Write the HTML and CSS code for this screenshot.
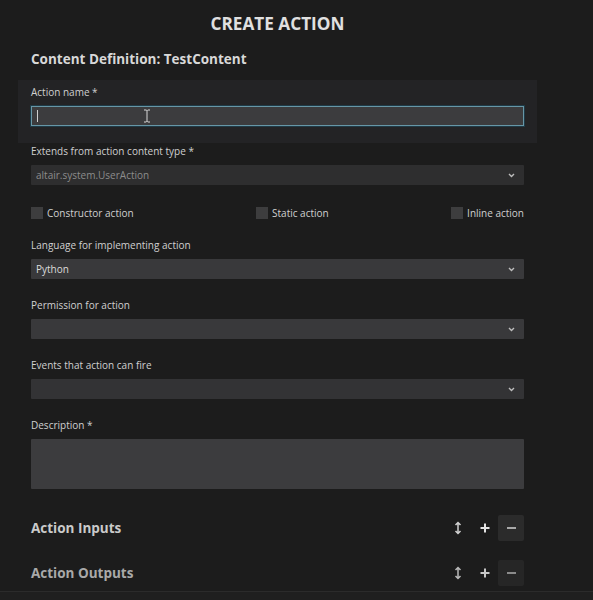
FILE: index.html
```html
<!DOCTYPE html>
<html lang="en">
<head>
<meta charset="utf-8">
<title>Create Action</title>
<link rel="stylesheet" href="styles.css">
</head>
<body>
<div class="page">
  <h1 class="title">CREATE ACTION</h1>
  <h2 class="subtitle">Content Definition: TestContent</h2>

  <div class="panel">
    <div class="label">Action name *</div>
    <div class="input focus"><span class="caret"></span></div>
    <svg class="ibeam" width="8" height="14" viewBox="0 0 8 14"><path d="M1 1h2.2l0.8 0.8 0.8-0.8H7M4 1.8v10.4M1 13h2.2l0.8-0.8 0.8 0.8H7" fill="none" stroke="#d8d8d8" stroke-width="1"/></svg>
  </div>

  <div class="field first">
    <div class="label">Extends from action content type *</div>
    <div class="select disabled"><span>altair.system.UserAction</span><svg class="chev" width="7" height="5" viewBox="0 0 7 5"><path d="M1 1l2.5 2.5L6 1" fill="none" stroke="#bdbdbd" stroke-width="1.4"/></svg></div>
  </div>

  <div class="checks">
    <label class="check"><span class="box"></span>Constructor action</label>
    <label class="check"><span class="box"></span>Static action</label>
    <label class="check"><span class="box"></span>Inline action</label>
  </div>

  <div class="field lang">
    <div class="label">Language for implementing action</div>
    <div class="select"><span>Python</span><svg class="chev" width="7" height="5" viewBox="0 0 7 5"><path d="M1 1l2.5 2.5L6 1" fill="none" stroke="#bdbdbd" stroke-width="1.4"/></svg></div>
  </div>

  <div class="field">
    <div class="label">Permission for action</div>
    <div class="select"><span></span><svg class="chev" width="7" height="5" viewBox="0 0 7 5"><path d="M1 1l2.5 2.5L6 1" fill="none" stroke="#bdbdbd" stroke-width="1.4"/></svg></div>
  </div>

  <div class="field">
    <div class="label">Events that action can fire</div>
    <div class="select dim"><span></span><svg class="chev" width="7" height="5" viewBox="0 0 7 5"><path d="M1 1l2.5 2.5L6 1" fill="none" stroke="#bdbdbd" stroke-width="1.4"/></svg></div>
  </div>

  <div class="field">
    <div class="label">Description *</div>
    <div class="textarea"></div>
  </div>

  <div class="section inputs">
    <div class="section-title">Action Inputs</div>
    <div class="tools">
      <svg class="sort" width="8" height="14" viewBox="0 0 8 14"><path d="M4 1.5v11M1.5 4L4 1.5 6.5 4M1.5 10L4 12.5 6.5 10" fill="none" stroke="#d0d0d0" stroke-width="1.5"/></svg>
      <svg class="plus" width="10" height="10" viewBox="0 0 10 10"><path d="M5 0.5v9M0.5 5h9" stroke="#e4e4e4" stroke-width="2"/></svg>
      <div class="minus"><span></span></div>
    </div>
  </div>

  <div class="section outputs">
    <div class="section-title">Action Outputs</div>
    <div class="tools">
      <svg class="sort" width="8" height="14" viewBox="0 0 8 14"><path d="M4 1.5v11M1.5 4L4 1.5 6.5 4M1.5 10L4 12.5 6.5 10" fill="none" stroke="#b8b8b8" stroke-width="1.5"/></svg>
      <svg class="plus" width="10" height="10" viewBox="0 0 10 10"><path d="M5 0.5v9M0.5 5h9" stroke="#c8c8c8" stroke-width="2"/></svg>
      <div class="minus"><span></span></div>
    </div>
  </div>
</div>
<div class="footer"></div>
</body>
</html>
```

FILE: styles.css
```css
html, body {
  margin: 0;
  padding: 0;
  background: #1c1c1c;
  height: 600px;
  overflow: hidden;
}
body {
  font-family: "Open Sans", "Noto Sans", sans-serif;
  color: #d2d2d2;
}
.page {
  padding: 0 69px 0 31px;
}
.title {
  margin: 0;
  padding-top: 1px;
  height: 45px;
  line-height: 45px;
  text-align: center;
  font-size: 17.2px;
  font-weight: 700;
  color: #e0e0e0;
}
.subtitle {
  margin: 0;
  height: 26px;
  line-height: 26px;
  font-size: 13.5px;
  font-weight: 700;
  color: #d8d8d8;
}
.panel {
  position: relative;
  margin: 8px -13px 0;
  padding: 4px 13px 17px;
  background: #232325;
  height: 42px;
}
.label {
  height: 16px;
  line-height: 16px;
  font-size: 10px;
  color: #d0d0d0;
}
.input {
  margin-top: 6px;
  height: 20px;
  box-sizing: border-box;
  background: #3c3c3e;
  border: 1px solid #6796a6;
  box-shadow: 0 0 0 1px #1f3a46;
  display: flex;
  align-items: center;
  padding-left: 5px;
}
.caret {
  width: 1px;
  height: 12px;
  background: #cfcfcf;
}
.ibeam {
  position: absolute;
  left: 125px;
  top: 29px;
}
.field {
  margin-top: 18px;
}
.field.first {
  margin-top: 0;
}
.field.lang {
  margin-top: 14px;
}
.select {
  margin-top: 6px;
  height: 20px;
  background: #39393b;
  border-radius: 1px;
  display: flex;
  align-items: center;
  justify-content: space-between;
  padding: 0 9px 0 5px;
  font-size: 10px;
  color: #dcdcdc;
}
.select.disabled {
  background: #2e2e2f;
  color: #8c8c8c;
}
.select.dim {
  background: #333335;
}
.chev {
  display: block;
}
.checks {
  margin-top: 18px;
  height: 20px;
  display: flex;
  justify-content: space-between;
  align-items: center;
}
.check {
  display: flex;
  align-items: center;
  gap: 4px;
  font-size: 10px;
  color: #d0d0d0;
}
.box {
  width: 12px;
  height: 12px;
  background: #3d3d3e;
}
.textarea {
  margin-top: 6px;
  height: 50px;
  background: #3c3c3e;
  border-radius: 1px;
}
.section {
  display: flex;
  justify-content: space-between;
  align-items: center;
  height: 26px;
}
.section.inputs {
  margin-top: 26px;
}
.section.outputs {
  margin-top: 19px;
}
.section-title {
  font-size: 13.5px;
  font-weight: 700;
  color: #cacaca;
}
.outputs .section-title {
  color: #a9a9a9;
}
.tools {
  display: flex;
  align-items: center;
}
.sort {
  display: block;
  margin-right: 18px;
}
.plus {
  display: block;
  margin-right: 8px;
}
.minus {
  width: 26px;
  height: 26px;
  background: #2b2b2b;
  border-radius: 2px;
  display: flex;
  align-items: center;
  justify-content: center;
}
.minus span {
  width: 9px;
  height: 1.5px;
  background: #a8a8a8;
}
.outputs .minus {
  background: #262626;
}
.outputs .minus span {
  background: #8a8a8a;
}
.footer {
  position: absolute;
  left: 0;
  right: 0;
  top: 591px;
  height: 9px;
  border-top: 1px solid #2b2b2b;
  background: #1f1f1f;
}
```
